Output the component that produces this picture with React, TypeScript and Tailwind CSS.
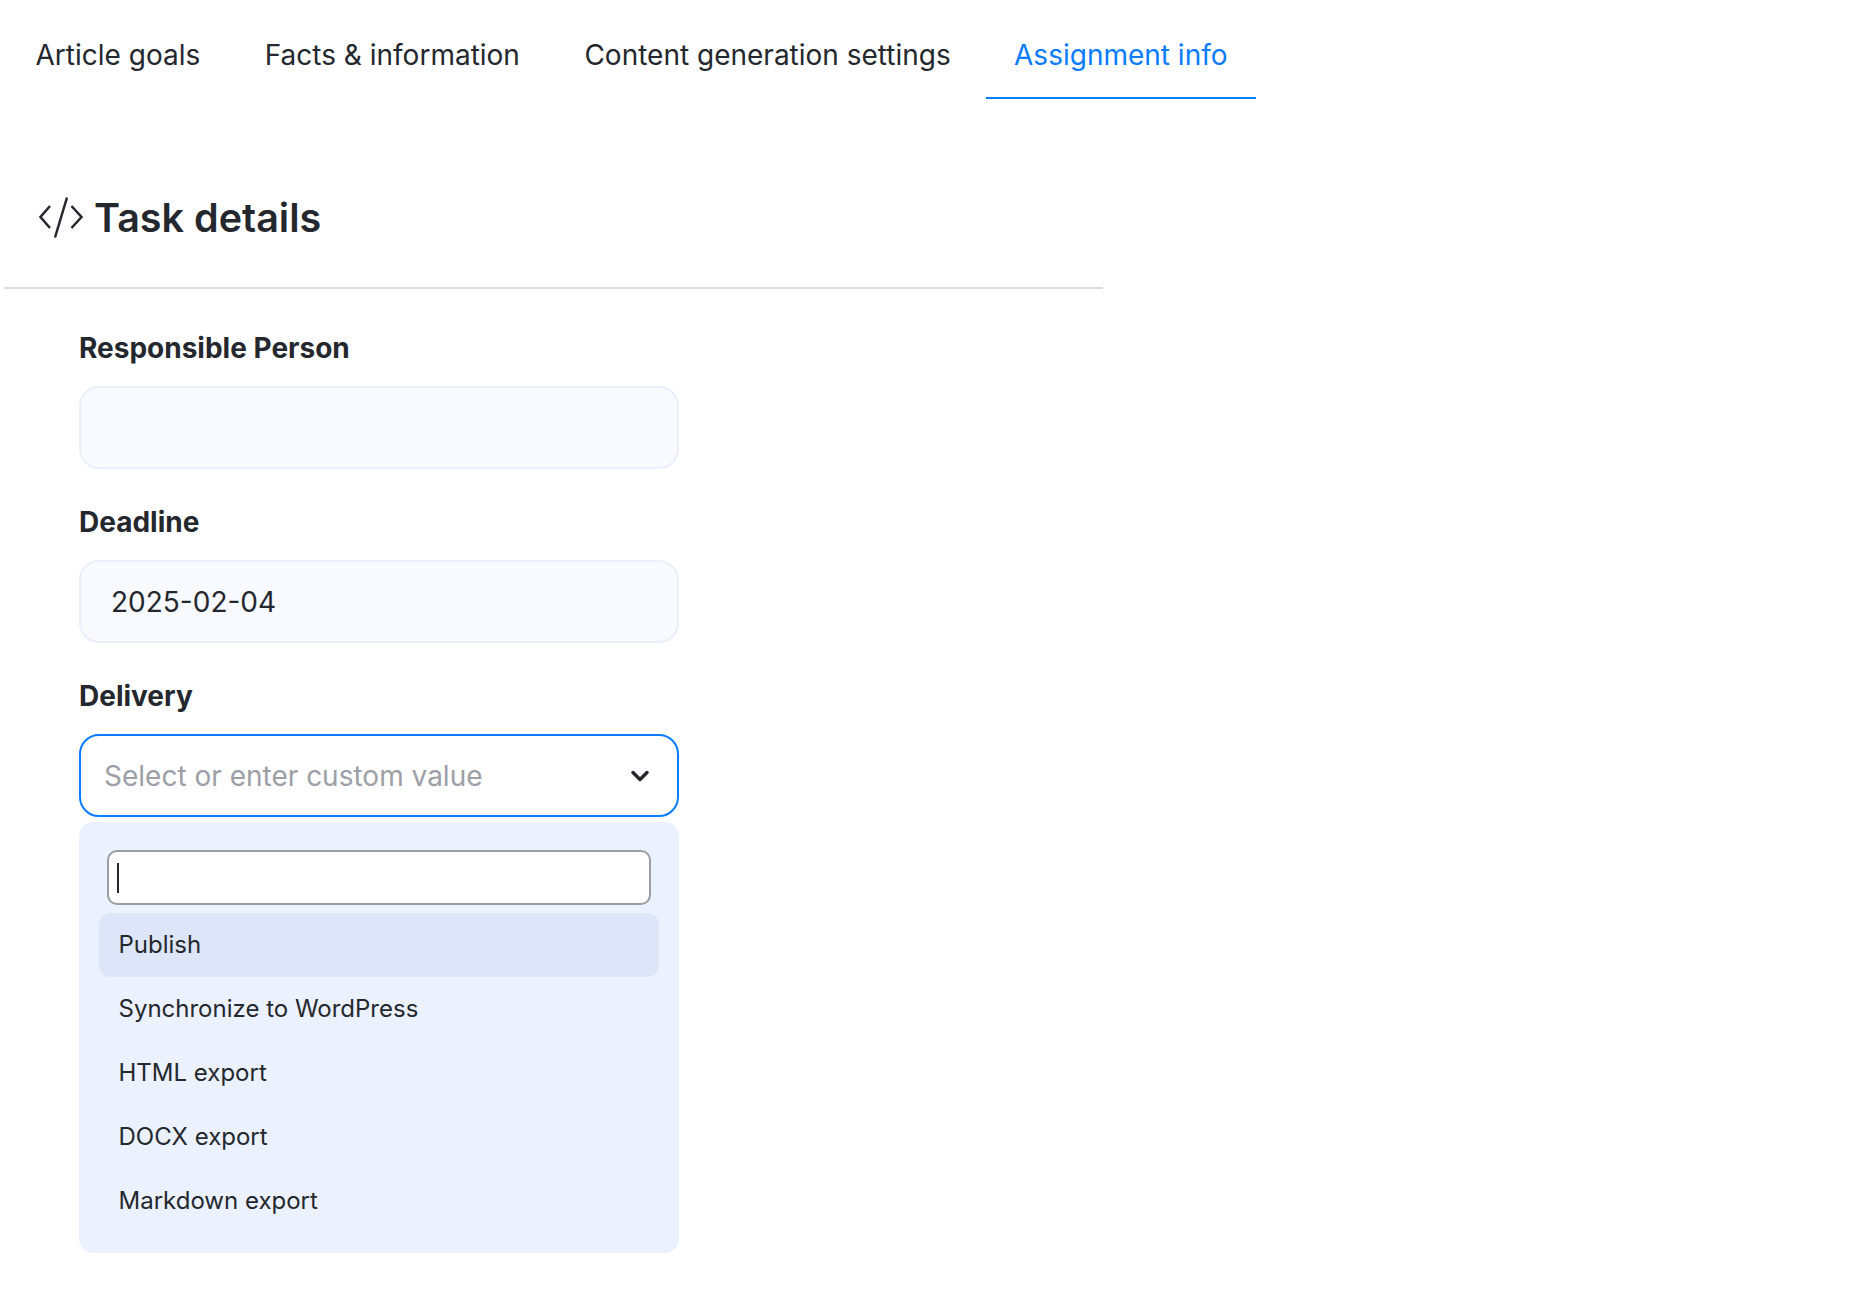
import { ChevronDown } from "lucide-react";

const tabs = ["Article goals", "Facts & information", "Content generation settings"];
const options = ["Synchronize to WordPress", "HTML export", "DOCX export", "Markdown export"];

export default function App() {
  return (
    <div className="min-h-[1302px] bg-white text-[#24282e] font-['Inter',sans-serif]">
      {/* Tabs */}
      <div className="flex h-[99px]">
        {tabs.map((tab) => (
          <div key={tab} className="px-9 first:pl-[35.5px] pt-[36px] mr-[-7.5px] text-[28px] leading-[38px]">
            {tab}
          </div>
        ))}
        <div className="ml-[6.5px] w-[270px] h-[99px] border-b-2 border-[#0a7cff] pt-[36px] text-center text-[28px] leading-[38px] text-[#0a7cff]">
          Assignment info
        </div>
      </div>

      {/* Section header */}
      <div className="ml-1 w-[1099px] h-[190px] border-b-2 border-[#d8dde6] pl-[35px] pt-[94px]">
        <div className="flex items-center gap-[10px]">
          <svg width="45" height="41" viewBox="0 0 45 41" fill="none" stroke="#24282e" strokeWidth="2.5">
            <path d="M11 9 L1.5 20 L11 31" />
            <path d="M32.5 9 L42.5 20 L32.5 31" />
            <path d="M28 0.5 L16 40.5" />
          </svg>
          <h2 className="pt-[1px] text-[39.5px] leading-[48px] font-semibold">Task details</h2>
        </div>
      </div>

      {/* Form */}
      <div className="ml-[79px] w-[600px] pt-[39px]">
        <div className="text-[28px] leading-[40px] font-bold">Responsible Person</div>
        <div className="mt-[18px] h-[83px] rounded-[20px] border-2 border-[#e9effb] bg-[#f8faff]" />

        <div className="mt-[33px] text-[28px] leading-[40px] font-bold">Deadline</div>
        <div className="mt-[18px] h-[83px] rounded-[20px] border-2 border-[#e9effb] bg-[#f8faff] flex items-center pl-[30px] text-[28px]">
          2025-02-04
        </div>

        <div className="mt-[33px] text-[28px] leading-[40px] font-bold">Delivery</div>
        <div className="mt-[18px] h-[83px] rounded-[20px] border-2 border-[#0a7cff] bg-white flex items-center justify-between pl-[23px] pr-[23px] text-[28px] text-[#9ca0a6]">
          <span>Select or enter custom value</span>
          <ChevronDown size={28} strokeWidth={3} className="text-[#24282e]" />
        </div>

        {/* Dropdown */}
        <div className="mt-[5px] h-[431px] rounded-[14px] bg-[#ebf1fe] pt-[28px] px-[20px]">
          <div className="mx-[8px] h-[55px] rounded-[10px] border-2 border-[#9b9da2] bg-white flex items-center pl-[8px]">
            <div className="w-[2px] h-[30px] bg-[#24282e]" />
          </div>
          <div className="mt-[8px] h-[64px] rounded-[12px] bg-[#dce6f8] flex items-center pl-[19.5px] text-[24px]">Publish</div>
          {options.map((option) => (
            <div key={option} className="h-[64px] flex items-center pl-[19.5px] text-[24px]">
              {option}
            </div>
          ))}
        </div>
      </div>
    </div>
  );
}
